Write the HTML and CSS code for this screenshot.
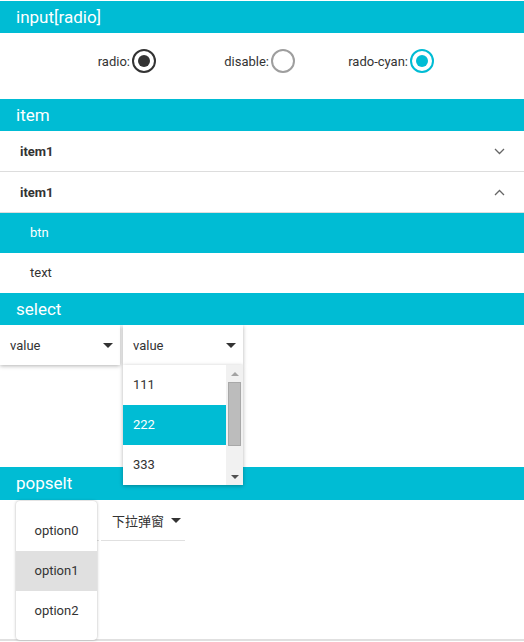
FILE: index.html
```html
<!DOCTYPE html>
<html>
<head>
<meta charset="utf-8">
<link rel="stylesheet" href="styles.css">
</head>
<body>
<div class="page">
  <div class="sec-title">input[radio]</div>
  <div class="radio-row">
    <label class="radio-item">radio:<span class="radio radio-dark"><span class="dot"></span></span></label>
    <label class="radio-item">disable:<span class="radio radio-disabled"></span></label>
    <label class="radio-item">rado-cyan:<span class="radio radio-cyan"><span class="dot"></span></span></label>
  </div>

  <div class="sec-title">item</div>
  <div class="item-row">
    <span class="item-name">item1</span>
    <svg class="chev" width="11" height="7" viewBox="0 0 11 7"><path d="M1 1 L5.5 5.5 L10 1" fill="none" stroke="#666" stroke-width="1.3"/></svg>
  </div>
  <div class="item-row">
    <span class="item-name">item1</span>
    <svg class="chev" width="11" height="7" viewBox="0 0 11 7"><path d="M1 6 L5.5 1.5 L10 6" fill="none" stroke="#666" stroke-width="1.3"/></svg>
  </div>
  <div class="sub-row sub-active">btn</div>
  <div class="sub-row">text</div>

  <div class="sec-title">select</div>
  <div class="select-area">
    <div class="select-box">
      <span>value</span><span class="caret"></span>
    </div>
    <div class="select-box select-open">
      <span>value</span><span class="caret"></span>
      <div class="dropdown">
        <div class="options">
          <div class="opt">111</div>
          <div class="opt opt-active">222</div>
          <div class="opt">333</div>
        </div>
        <div class="scrollbar">
          <span class="sb-up"></span>
          <div class="sb-track"><div class="sb-thumb"></div></div>
          <span class="sb-down"></span>
        </div>
      </div>
    </div>
  </div>

  <div class="sec-title sec-pop">popselt</div>
  <div class="pop-area">
    <div class="trigger trigger-hidden"></div>
    <div class="trigger"><span class="cn">下拉弹窗</span><span class="caret"></span></div>
    <div class="popup">
      <div class="pop-opt">option0</div>
      <div class="pop-opt pop-active">option1</div>
      <div class="pop-opt">option2</div>
    </div>
  </div>
</div>
</body>
</html>
```
FILE: styles.css
```css
* { box-sizing: border-box; }
html, body { margin: 0; padding: 0; background: #fff; }
body {
  font-family: Roboto, "Noto Sans CJK SC", sans-serif;
  font-size: 13px;
  color: #333;
}
.page { padding-top: 1px; width: 524px; height: 642px; overflow: hidden; }

.sec-title {
  height: 32px;
  line-height: 32px;
  background: #00bcd4;
  color: #fff;
  font-size: 17px;
  padding-left: 16px;
  position: relative;
  z-index: 1;
}
.sec-pop { height: 33px; margin-top: 1px; }

.radio-row {
  height: 66px;
  padding-top: 16px;
  padding-left: 17px;
  display: grid;
  grid-template-columns: repeat(3, 139px);
  justify-items: end;
  align-items: start;
}
.radio-item {
  display: flex;
  align-items: center;
  gap: 2px;
  height: 24px;
}
.radio {
  width: 24px;
  height: 24px;
  border-radius: 50%;
  border: 2px solid #333;
  display: flex;
  align-items: center;
  justify-content: center;
}
.radio .dot { width: 12px; height: 12px; border-radius: 50%; background: #333; }
.radio-disabled { border-color: #9e9e9e; }
.radio-cyan { border-color: #00bcd4; }
.radio-cyan .dot { background: #00bcd4; }

.item-row {
  height: 41px;
  border-bottom: 1px solid #ddd;
  display: flex;
  align-items: center;
  justify-content: space-between;
  padding: 0 19px 0 20px;
}
.item-name { font-weight: bold; }
.sub-row {
  height: 40px;
  line-height: 40px;
  padding-left: 30px;
}
.sub-active { background: #00bcd4; color: #fff; }

.select-area {
  height: 141px;
  display: flex;
  gap: 3px;
  align-items: flex-start;
}
.select-box {
  position: relative;
  width: 120px;
  height: 40px;
  background: #fff;
  box-shadow: 0 1px 4px rgba(0,0,0,0.3);
  display: flex;
  align-items: center;
  justify-content: space-between;
  padding: 0 7px 0 10px;
}
.caret {
  width: 0;
  height: 0;
  border-left: 5px solid transparent;
  border-right: 5px solid transparent;
  border-top: 5px solid #333;
}
.dropdown {
  position: absolute;
  left: 0;
  top: 40px;
  width: 120px;
  height: 120px;
  background: #fff;
  box-shadow: 0 1px 4px rgba(0,0,0,0.3);
  display: flex;
  z-index: 5;
}
.options { flex: 1; }
.opt { height: 40px; line-height: 40px; padding-left: 10px; }
.opt-active { background: #00bcd4; color: #fff; }
.scrollbar {
  width: 17px;
  background: #f1f1f1;
  display: flex;
  flex-direction: column;
  align-items: center;
}
.sb-up, .sb-down {
  height: 17px;
  display: flex;
  align-items: center;
  justify-content: center;
}
.sb-up::before {
  content: "";
  border-left: 4px solid transparent;
  border-right: 4px solid transparent;
  border-bottom: 4px solid #a3a3a3;
}
.sb-down::before {
  content: "";
  border-left: 4px solid transparent;
  border-right: 4px solid transparent;
  border-top: 4px solid #505050;
}
.sb-track { flex: 1; width: 100%; padding: 0 2px; }
.sb-thumb {
  height: 64px;
  background: #bcbcbc;
  border: 1px solid #a8a8a8;
}

.pop-area {
  position: relative;
  height: 141px;
  border-bottom: 2px solid #e0e0e0;
  display: flex;
  padding-left: 16px;
  gap: 2px;
}
.trigger {
  height: 41px;
  width: 84px;
  border-bottom: 1px solid #e0e0e0;
  display: flex;
  align-items: center;
  padding-left: 11px;
  gap: 7px;
}
.trigger-hidden { width: 83px; }
.cn { font-family: "Noto Sans CJK SC", sans-serif; font-size: 13px; color: #333; }
.popup {
  position: absolute;
  left: 16px;
  top: 1px;
  width: 81px;
  height: 139px;
  background: #fff;
  border-radius: 4px;
  box-shadow: 0 0 3px rgba(0,0,0,0.3);
  padding-top: 10px;
  z-index: 2;
}
.pop-opt { height: 40px; line-height: 40px; text-align: center; }
.pop-active { background: #e0e0e0; }
```
